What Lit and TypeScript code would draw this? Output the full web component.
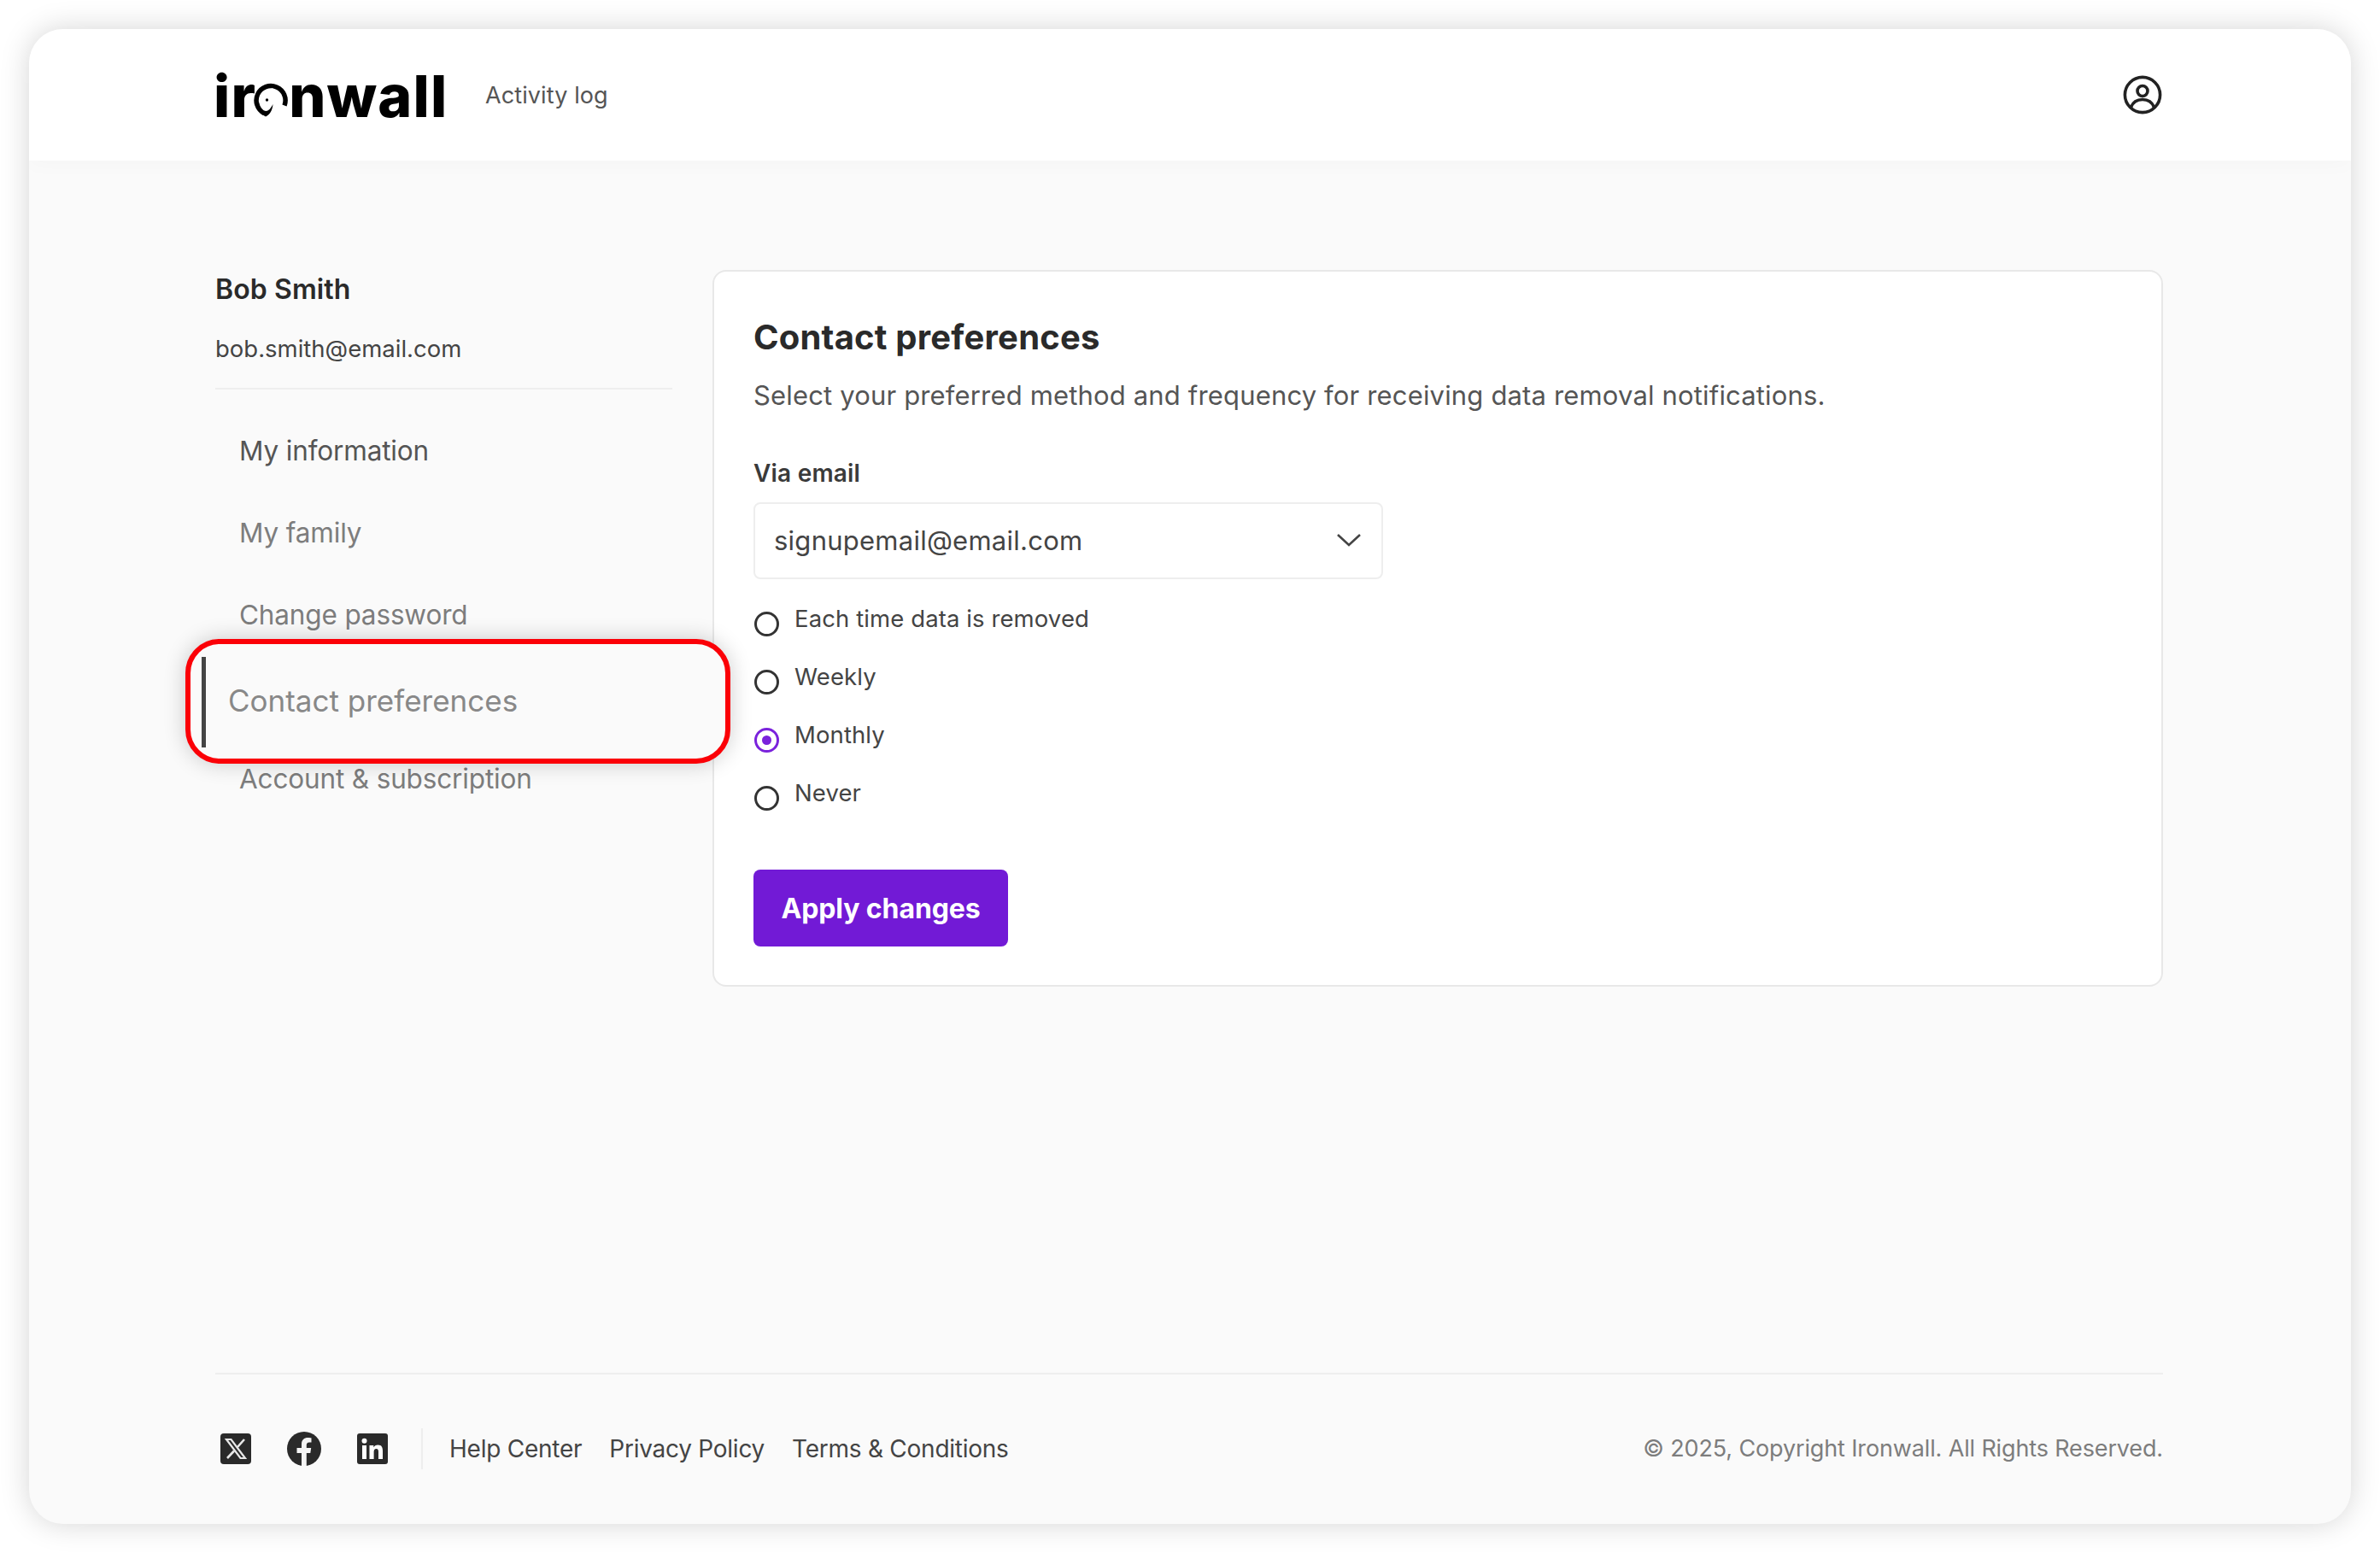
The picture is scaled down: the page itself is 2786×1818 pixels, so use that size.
import { LitElement, html, css, svg } from "lit";
import { customElement } from "lit/decorators.js";

const options = [
  { label: "Each time data is removed", on: false },
  { label: "Weekly", on: false },
  { label: "Monthly", on: true },
  { label: "Never", on: false },
];

@customElement("app-root")
export class AppRoot extends LitElement {
  static styles = css`
    :host { display: block; width: 2786px; height: 1818px; background: #fff; font-family: Inter, "Liberation Sans", sans-serif; color: #2a2a2a; overflow: hidden; }
    * { box-sizing: border-box; }
    .page { padding: 34px; }
    .window { width: 2718px; height: 1750px; border-radius: 40px; background: #fafafa; box-shadow: 0 0 34px rgba(0,0,0,.17); display: flex; flex-direction: column; overflow: hidden; }
    .header { position: relative; height: 154px; flex: none; background: #fff; padding: 0 220px 0 216px; display: flex; align-items: center; box-shadow: 0 4px 24px rgba(0,0,0,.025); }
    .logo { display: flex; align-items: baseline; width: 274px; font-weight: 800; font-size: 68px; line-height: 60px; letter-spacing: 1.2px; color: #000; margin-top: 2px; white-space: nowrap; }
    .logo svg { width: 40px; height: 40px; margin: 0 1px -1px -3px; flex: none; }
    .activity { margin-left: 44px; font-size: 27px; color: #555; letter-spacing: .1px; }
    .avatar { margin-left: auto; margin-right: 1px; width: 46px; height: 46px; }
    .main { flex: 1; padding: 128px 220px 0 218px; display: flex; gap: 47px; align-items: flex-start; }
    .side { width: 535px; flex: none; }
    .name { margin-top: 2px; font-size: 32px; line-height: 42px; font-weight: 600; letter-spacing: .1px; }
    .email { font-size: 27.5px; line-height: 40px; margin-top: 28px; color: #444; }
    .side-rule { height: 2px; background: #eeeeee; margin-top: 26px; }
    .nav { display: flex; flex-direction: column; margin-top: 23px; }
    .nav-item { height: 96px; display: flex; align-items: center; padding-left: 28px; font-size: 31.5px; color: #7d7d7d; letter-spacing: -.15px; }
    .nav-item.first { color: #555; }
    .nav-item.hl { position: relative; z-index: 2; width: 638px; height: 146px; margin: -19px 0 -31px -35px; padding-left: 44px; padding-bottom: 2px; background: #fafafa; border: 6px solid #fb0007; border-radius: 40px; box-shadow: 0 0 26px rgba(0,0,0,.2); color: #888; font-size: 35px; letter-spacing: 0; }
    .bar { position: absolute; left: 13px; top: 15px; width: 5px; height: 106px; background: #444; }
    .card { width: 1698px; flex: none; height: 839px; background: #fff; border: 2px solid #e8e8e8; border-radius: 16px; padding: 51px 46px 42px; }
    h2 { margin: 0; font-size: 40px; line-height: 52px; font-weight: 700; letter-spacing: .2px; }
    .desc { margin: 20px 0 0; font-size: 31px; line-height: 44px; color: #555; letter-spacing: .16px; }
    .via { margin-top: 51px; font-size: 28px; line-height: 36px; font-weight: 600; color: #3a3a3a; letter-spacing: .2px; }
    .select { margin-top: 16px; width: 737px; height: 90px; border: 2px solid #eeeeee; border-radius: 8px; padding: 0 23px 2px 22px; display: flex; align-items: center; justify-content: space-between; font-size: 31px; color: #444; letter-spacing: .25px; }
    .select svg { width: 30px; height: 18px; }
    .radios { margin: 28px 0 0 1px; display: flex; flex-direction: column; gap: 32px; }
    .radio { display: flex; align-items: flex-start; gap: 18px; height: 36px; font-size: 27.5px; line-height: 36px; color: #444; letter-spacing: .1px; }
    .dot { width: 29px; height: 29px; margin-top: 10px; border: 3px solid #333; border-radius: 50%; flex: none; display: flex; align-items: center; justify-content: center; }
    .dot.on { border-color: #7a22dc; }
    .dot.on::after { content: ""; width: 11px; height: 11px; border-radius: 50%; background: #7a22dc; }
    .btn { margin-top: 72px; width: 298px; height: 90px; border-radius: 8px; background: #721ad6; color: #fff; font-size: 32px; font-weight: 700; display: flex; align-items: center; justify-content: center; letter-spacing: -.1px; }
    .footer { height: 177px; flex: none; margin: 0 220px 0 218px; border-top: 2px solid #eeeeee; padding-bottom: 2px; display: flex; align-items: center; }
    .social { display: flex; align-items: center; }
    .social svg { display: block; flex: none; }
    .sep { width: 2px; height: 48px; background: #eeeeee; margin: 0 31px 0 39px; }
    .links { display: flex; gap: 32px; font-size: 28px; color: #444; letter-spacing: -.25px; }
    .copy { margin-left: auto; font-size: 27px; color: #7d7d7d; letter-spacing: -.14px; }
  `;

  private logoO() {
    return svg`<svg viewBox="0 0 40 40" aria-hidden="true">
      <path d="M36 26.5 A17 17 0 1 0 12 35.5" fill="none" stroke="#000" stroke-width="5.5"/>
      <path d="M22 6 C27 14 24 26 15 38 C6 30 7 16 22 6 Z" fill="#fff"/>
      <path d="M6 22 C7 29 11 33 14.5 33 C17 33 20 30 22.5 25 C22 32 19 37 14 39.5 C7 36 3 29 6 22 Z" fill="#000"/>
      <circle cx="15.5" cy="20" r="1.7" fill="#000"/>
    </svg>`;
  }

  private socials() {
    return html`
      <svg style="margin-left:6px" width="36" height="36" viewBox="0 0 36 36" aria-hidden="true">
        <rect width="36" height="36" rx="4" fill="#2a2a2a"/>
        <path d="M7 7 L12.5 7 L29 29 L23.5 29 Z" fill="none" stroke="#e8e8e8" stroke-width="2.2"/>
        <path d="M28 7 L20 16 M16 20.5 L8 29" fill="none" stroke="#e8e8e8" stroke-width="2.6"/>
      </svg>
      <svg style="margin-left:42px" width="40" height="40" viewBox="0 0 40 40" aria-hidden="true">
        <circle cx="20" cy="20" r="20" fill="#2a2a2a"/>
        <path d="M17 40 V25 H11.5 V19 H17 V14.5 C17 9.5 20 7 24.5 7 C26.5 7 28.5 7.4 28.5 7.4 V12.5 H26 C23.6 12.5 22.8 14 22.8 15.6 V19 H28.2 L27.3 25 H22.8 V40 Z" fill="#f4f4f4"/>
      </svg>
      <svg style="margin-left:42px" width="36" height="36" viewBox="0 0 36 36" aria-hidden="true">
        <rect width="36" height="36" rx="3" fill="#2a2a2a"/>
        <rect x="6" y="14" width="5" height="16" fill="#fff"/>
        <circle cx="8.5" cy="8.8" r="3" fill="#fff"/>
        <path d="M14.5 14 H19.3 V16.3 C20.2 14.8 22 13.6 24.4 13.6 C28.8 13.6 30 16.4 30 20.6 V30 H25 V21.6 C25 19.6 24.5 18 22.5 18 C20.5 18 19.6 19.5 19.6 21.6 V30 H14.5 Z" fill="#fff"/>
      </svg>`;
  }

  render() {
    return html`
      <div class="page">
        <div class="window">
          <header class="header">
            <div class="logo"><span>ir</span>${this.logoO()}<span>nwall</span></div>
            <div class="activity">Activity log</div>
            <svg class="avatar" viewBox="0 0 46 46" aria-hidden="true" fill="none" stroke="#222" stroke-width="3.6">
              <circle cx="23" cy="23" r="20.6"/>
              <circle cx="23" cy="18.5" r="6"/>
              <path d="M9.5 37.5 C12 31 17 28.5 23 28.5 S34 31 36.5 37.5"/>
            </svg>
          </header>
          <div class="main">
            <aside class="side">
              <div class="name">Bob Smith</div>
              <div class="email">bob.smith@email.com</div>
              <div class="side-rule"></div>
              <nav class="nav">
                <div class="nav-item first">My information</div>
                <div class="nav-item">My family</div>
                <div class="nav-item">Change password</div>
                <div class="nav-item hl"><span class="bar"></span>Contact preferences</div>
                <div class="nav-item">Account &amp; subscription</div>
              </nav>
            </aside>
            <section class="card">
              <h2>Contact preferences</h2>
              <p class="desc">Select your preferred method and frequency for receiving data removal notifications.</p>
              <div class="via">Via email</div>
              <div class="select">
                <span>signupemail@email.com</span>
                <svg viewBox="0 0 30 18" aria-hidden="true" fill="none" stroke="#444" stroke-width="2.6"><path d="M2 3 L15 15 L28 3"/></svg>
              </div>
              <div class="radios">
                ${options.map(o => html`<div class="radio"><span class="dot ${o.on ? "on" : ""}"></span><span>${o.label}</span></div>`)}
              </div>
              <div class="btn">Apply changes</div>
            </section>
          </div>
          <footer class="footer">
            <div class="social">${this.socials()}</div>
            <div class="sep"></div>
            <div class="links"><span>Help Center</span><span>Privacy Policy</span><span>Terms &amp; Conditions</span></div>
            <div class="copy">© 2025, Copyright Ironwall. All Rights Reserved.</div>
          </footer>
        </div>
      </div>
    `;
  }
}
